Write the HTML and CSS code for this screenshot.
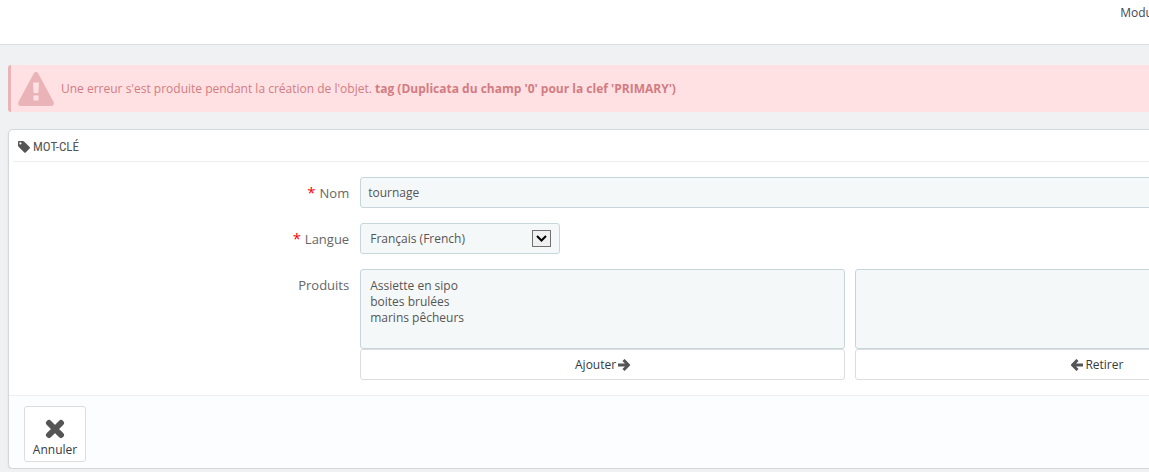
FILE: index.html
```html
<!DOCTYPE html>
<html lang="fr">
  <head>
    <meta charset="UTF-8" />
    <meta name="viewport" content="width=device-width, initial-scale=1.0" />
    <title>Mot-clé</title>
    <link rel="stylesheet" href="styles.css">
  </head>
  <body>
    <header class="toolbar">
      <a href="#">Modu</a>
    </header>

    <main class="content">
      <div class="alert" role="alert">
        <svg class="alert-icon" viewBox="0 0 36 34" aria-hidden="true">
          <path fill-rule="evenodd" d="M16 1Q18-1 20 1L35.600 30Q36.500 34 33 34H3Q-.5 34 .4 30ZM15 10.500L15.600 21H20.400L21 10.500ZM15.500 23.500V28.500H20.500V23.500Z" />
        </svg>
        <p>Une erreur s'est produite pendant la création de l'objet. <strong>tag (Duplicata du champ '0' pour la clef 'PRIMARY')</strong></p>
      </div>

      <form class="panel">
        <h3 class="panel-heading">
          <svg class="icon-tag" viewBox="0 0 12 12" aria-hidden="true">
            <path fill-rule="evenodd" d="M0 1Q0 0 1 0H4.800Q5.600 0 6.300.7L11.600 6Q12.300 6.700 11.600 7.400L7.700 11.400Q7 12 6.300 11.400L.8 6Q0 5.200 0 4.500ZM2.400 1.300A1.100 1.100 0 1 0 2.400 3.500A1.100 1.100 0 1 0 2.400 1.300Z" />
          </svg>
          MOT-CLÉ
        </h3>

        <div class="panel-body">
          <div class="form-group">
            <label class="required" for="name">Nom</label>
            <input class="field" id="name" type="text" value="tournage">
          </div>

          <div class="form-group">
            <label class="required" for="lang">Langue</label>
            <div class="select">
              <select class="field" id="lang">
                <option>Français (French)</option>
              </select>
              <svg class="select-arrow" viewBox="0 0 19 17" aria-hidden="true">
                <rect x=".5" y=".5" width="18" height="16" />
                <path d="M5 6L9.500 10.500L14 6" />
              </svg>
            </div>
          </div>

          <div class="form-group">
            <label for="products">Produits</label>
            <div class="swap">
              <div class="swap-col">
                <select class="field list" id="products" multiple>
                  <option>Assiette en sipo</option>
                  <option>boites brulées</option>
                  <option>marins pêcheurs</option>
                </select>
                <button class="btn" type="button">
                  Ajouter
                  <svg class="icon-arrow" viewBox="0 0 12 12" aria-hidden="true"><path d="M0 6H10M5.500 1L10.500 6L5.500 11" /></svg>
                </button>
              </div>
              <div class="swap-col">
                <select class="field list" aria-label="Produits" multiple></select>
                <button class="btn" type="button">
                  <svg class="icon-arrow" viewBox="0 0 12 12" aria-hidden="true"><path d="M12 6H2M6.500 1L1.500 6L6.500 11" /></svg>
                  Retirer
                </button>
              </div>
            </div>
          </div>
        </div>

        <div class="panel-footer">
          <button class="btn btn-cancel" type="button">
            <svg class="icon-cancel" viewBox="0 0 20 20" aria-hidden="true"><path d="M4 4L16 16M16 4L4 16" /></svg>
            Annuler
          </button>
        </div>
      </form>
    </main>
  </body>
</html>
```
FILE: styles.css
```css
* {
  box-sizing: border-box;
  margin: 0;
  padding: 0;
}

body {
  background-color: #eff1f2;
  color: #555;
  font-family: "Open Sans", sans-serif;
  font-size: 12px;
  line-height: 17px;
  overflow: hidden;
}

.toolbar {
  height: 45px;
  padding: 4px 0 0 97.5%;
  background-color: #fff;
  border-bottom: 1px solid #ddd;
  overflow: hidden;
}
.toolbar a {
  color: #414856;
  text-decoration: none;
}

/* wider than the window, the right side runs off */
.content {
  width: 118%;
  padding: 20px 8px 0;
}

.alert {
  display: flex;
  align-items: center;
  gap: 7px;
  height: 47px;
  padding-left: 7px;
  margin-bottom: 17px;
  background-color: #ffe1e3;
  border-left: 3px solid #eab3b7;
  border-radius: 3px;
  color: #d27c82;
}
.alert-icon {
  width: 36px;
  height: 34px;
  fill: #eab3b7;
}

.panel {
  background-color: #fff;
  border: 1px solid #d3d8db;
  border-radius: 5px;
  box-shadow: 0 1px 2px rgba(0, 0, 0, 0.1);
}
.panel-heading {
  display: flex;
  align-items: center;
  gap: 3px;
  height: 32px;
  margin: 0 4px;
  padding: 2px 0 0 5px;
  border-bottom: 1px solid #eee;
  font-family: "Liberation Sans Narrow", "Roboto Condensed", "Open Sans", sans-serif;
  font-size: 13px;
  font-weight: 400;
}
.icon-tag {
  width: 12px;
  height: 12px;
  fill: #555;
}
.panel-body {
  display: grid;
  gap: 15px;
  padding: 15px 7px;
}

.form-group {
  display: grid;
  grid-template-columns: 26% 1fr;
}
.form-group label {
  padding: 7px 11px 0 0;
  color: #666;
  font-size: 13px;
  line-height: 18px;
  text-align: right;
}
.required::before {
  content: "* ";
  color: #f00;
  font-size: 15px;
  line-height: 12px;
}

.field {
  width: 100%;
  height: 31px;
  padding: 0 7px;
  background-color: #f5f8f9;
  border: 1px solid #c7d6db;
  border-radius: 3px;
  color: #555;
  font: inherit;
  appearance: none;
}
.select {
  position: relative;
  width: 200px;
}
.select .field {
  padding-left: 9px;
}
.select-arrow {
  position: absolute;
  top: 7px;
  right: 9px;
  width: 19px;
  height: 17px;
  fill: #f0f0f0;
  stroke: #707070;
  pointer-events: none;
}
.select-arrow path {
  fill: none;
  stroke: #000;
  stroke-width: 2;
}

.swap {
  display: grid;
  grid-template-columns: 1fr 1fr;
  gap: 10px;
}
.swap-col {
  display: grid;
}
.list {
  height: 80px;
  padding: 7px;
  overflow: hidden;
}
.list option {
  height: 16px;
  min-height: 16px;
  padding: 0 2px;
  line-height: 16px;
}

.btn {
  display: flex;
  align-items: center;
  justify-content: center;
  gap: 2px;
  height: 31px;
  background-color: #fff;
  border: 1px solid #ddd;
  border-radius: 3px;
  color: #363a41;
  font: inherit;
}
.btn svg {
  fill: none;
  stroke: #555;
}
.icon-arrow {
  width: 12px;
  height: 12px;
  stroke-width: 3;
}

.panel-footer {
  padding: 10px 15px 6px;
  background-color: #fcfdfe;
  border-top: 1px solid #eee;
  border-radius: 0 0 5px 5px;
}
.btn-cancel {
  flex-direction: column;
  width: 62px;
  height: 56px;
  padding-top: 8px;
}
.icon-cancel {
  width: 20px;
  height: 20px;
  stroke-width: 6;
  stroke-linecap: round;
}
```
